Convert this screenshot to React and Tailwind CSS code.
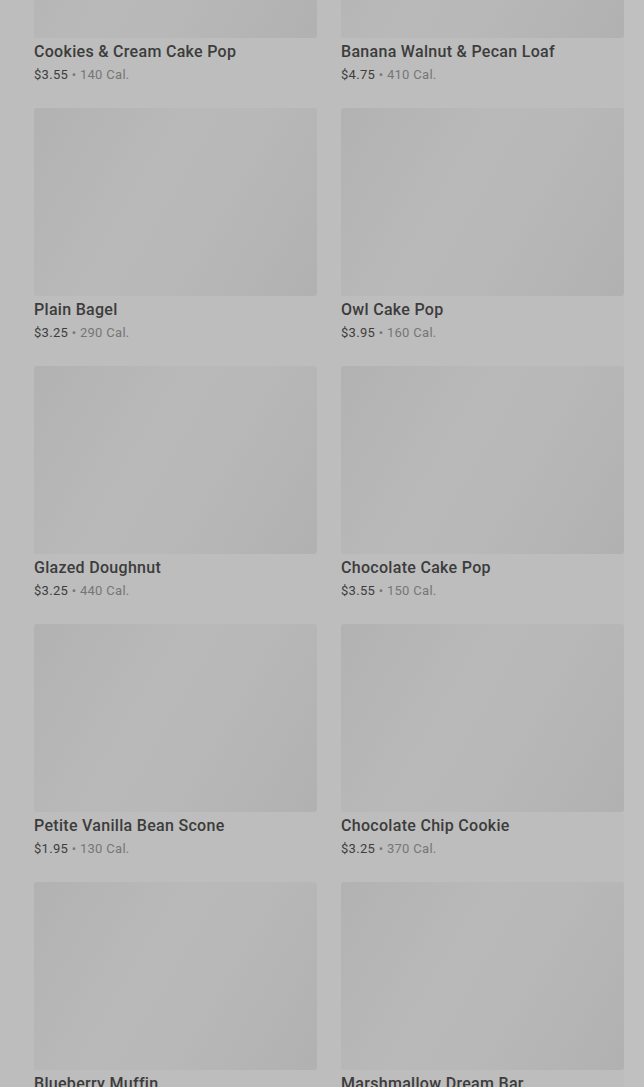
import React from 'react';

// Bakery items grid (behind a dimmed overlay)
const ITEMS = [
  { name: 'Cookies & Cream Cake Pop', price: '$3.55', cal: 140 },
  { name: 'Banana Walnut & Pecan Loaf', price: '$4.75', cal: 410 },
  { name: 'Plain Bagel', price: '$3.25', cal: 290 },
  { name: 'Owl Cake Pop', price: '$3.95', cal: 160 },
  { name: 'Glazed Doughnut', price: '$3.25', cal: 440 },
  { name: 'Chocolate Cake Pop', price: '$3.55', cal: 150 },
  { name: 'Petite Vanilla Bean Scone', price: '$1.95', cal: 130 },
  { name: 'Chocolate Chip Cookie', price: '$3.25', cal: 370 },
  { name: 'Blueberry Muffin', price: '$3.45', cal: 360 },
  { name: 'Marshmallow Dream Bar', price: '$2.95', cal: 210 },
];

const ItemCard = ({ item }) => (
  <div className="flex flex-col">
    <div className="h-[188px] rounded-[3px] bg-[linear-gradient(120deg,#b2b2b2_0%,#b9b9b9_40%,#b8b8b8_60%,#b1b1b1_100%)]" />
    <p className="mt-[4px] text-[16px] leading-[20px] font-medium text-[#3c3c3c] tracking-[0.3px]">
      {item.name}
    </p>
    <p className="mt-[4px] text-[13px] leading-[18px] text-[#3e3e3e] tracking-[0.3px]">
      {item.price}
      <span className="text-[#767676]"> • {item.cal} Cal.</span>
    </p>
  </div>
);

export default function App() {
  return (
    <div className="h-[1087px] w-[644px] overflow-hidden flex bg-[#bdbdbd] font-['Roboto',sans-serif]">
      <div className="w-[624px] pl-[34px]">
        <div className="mt-[-150px] grid grid-cols-2 gap-x-[24px] gap-y-[24px]">
          {ITEMS.map((item) => (
            <ItemCard key={item.name} item={item} />
          ))}
        </div>
      </div>
      <div className="w-[20px] bg-[#c0c0c0]" />
    </div>
  );
}
